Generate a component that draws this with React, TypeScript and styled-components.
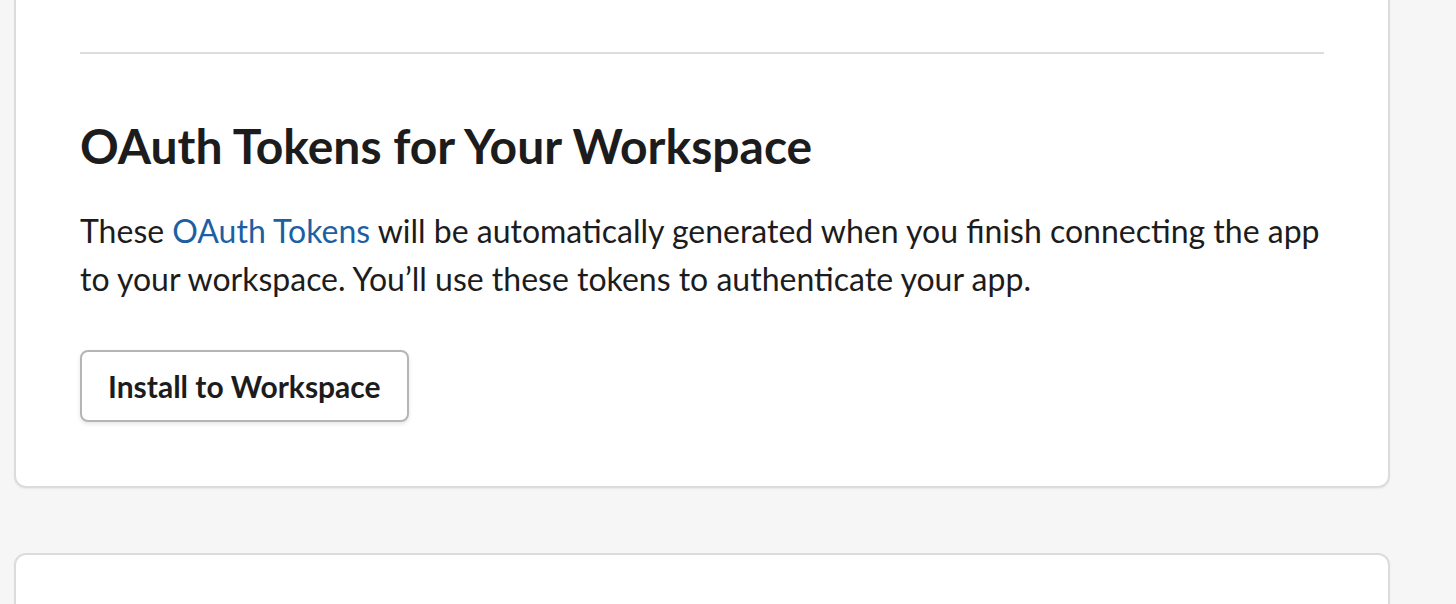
import React from "react";
import styled, { createGlobalStyle } from "styled-components";

const Global = createGlobalStyle`
  html, body { margin: 0; padding: 0; background: #f6f6f6; }
  body { font-family: Lato, "Noto Sans", sans-serif; color: #1d1c1d; overflow: hidden; }
`;

const Page = styled.div`
  display: flex;
  flex-direction: column;
  gap: 65px;
  padding: 0 66px 0 14px;
  margin-top: -40px;
`;

const Card = styled.section<{ $minH?: number }>`
  background: #ffffff;
  border: 2px solid #dcdcdc;
  border-radius: 12px;
  box-shadow: 0 1px 2px rgba(0, 0, 0, 0.06);
  padding: 90px 64px 64px;
  min-height: ${(p) => (p.$minH ? `${p.$minH}px` : "auto")};
`;

const Divider = styled.hr`
  border: none;
  height: 2px;
  background: #dddddd;
  margin: 0;
`;

const Heading = styled.h2`
  font-family: Lato, "Noto Sans", sans-serif;
  font-weight: 700;
  font-size: 48px;
  line-height: 1.2;
  margin: 63px 0 0;
  color: #1d1c1d;
`;

const Text = styled.p`
  font-size: 32px;
  line-height: 48px;
  margin: 32px 0 0;
  color: #1d1c1d;
`;

const Link = styled.a`
  color: #1d5fa3;
  text-decoration: none;
`;

const Button = styled.button`
  box-sizing: border-box;
  margin-top: 47px;
  height: 72px;
  width: fit-content;
  padding: 0 26px;
  display: flex;
  align-items: center;
  background: #ffffff;
  border: 2px solid #b5b5b5;
  border-radius: 8px;
  box-shadow: 0 2px 4px rgba(0, 0, 0, 0.1);
  font-family: Lato, "Noto Sans", sans-serif;
  font-weight: 700;
  font-size: 30px;
  color: #1d1c1d;
  cursor: pointer;
`;

export default function App() {
  return (
    <>
      <Global />
      <Page>
        <Card>
          <Divider />
          <Heading>OAuth Tokens for Your Workspace</Heading>
          <Text>
            These <Link href="#">OAuth Tokens</Link> will be automatically generated when you finish connecting the app
            to your workspace. You’ll use these tokens to authenticate your app.
          </Text>
          <Button>Install to Workspace</Button>
        </Card>
        <Card $minH={200} />
      </Page>
    </>
  );
}
